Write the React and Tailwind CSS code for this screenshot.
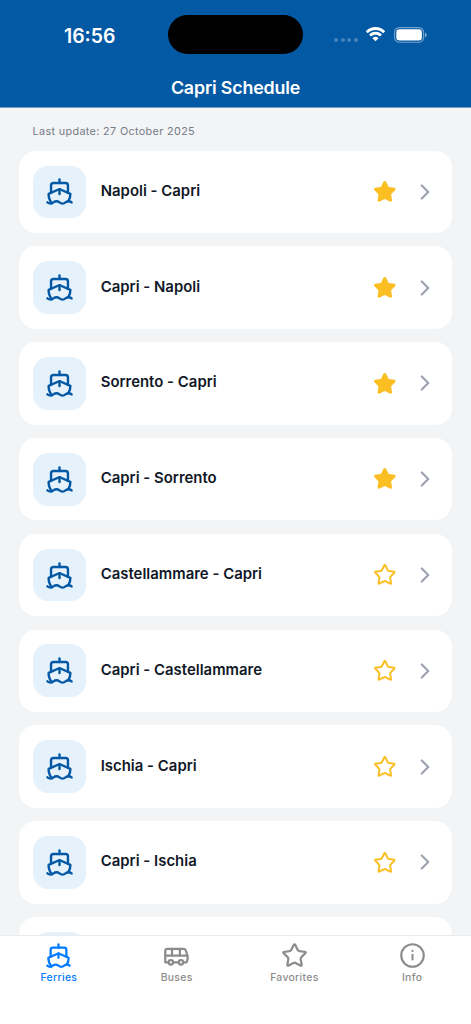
import { Bus, ChevronRight, Ship, Star } from "lucide-react";

const routes = [
  { id: 1, name: "Napoli - Capri", favorite: true },
  { id: 2, name: "Capri - Napoli", favorite: true },
  { id: 3, name: "Sorrento - Capri", favorite: true },
  { id: 4, name: "Capri - Sorrento", favorite: true },
  { id: 5, name: "Castellammare - Capri", favorite: false },
  { id: 6, name: "Capri - Castellammare", favorite: false },
  { id: 7, name: "Ischia - Capri", favorite: false },
  { id: 8, name: "Capri - Ischia", favorite: false },
  { id: 9, name: "", favorite: false }
];

function InfoIcon({ size }) {
  return (
    <svg width={size} height={size} viewBox="0 0 24 24" fill="none" stroke="currentColor">
      <circle cx="12" cy="12" r="10" strokeWidth="1.9" />
      <path d="M12 10.7v5.6" strokeWidth="1.8" />
      <circle cx="12" cy="7.9" r="1" fill="currentColor" stroke="none" />
    </svg>
  );
}

const tabs = [
  { label: "Ferries", icon: Ship, active: true },
  { label: "Buses", icon: Bus },
  { label: "Favorites", icon: Star },
  { label: "Info", icon: InfoIcon }
];

function StatusBar() {
  return (
    <div className="flex h-[69px] items-center">
      <div className="w-[168px] pl-[64px] pt-[2px] text-[19.4px] font-semibold leading-6">
        16:56
      </div>
      <div className="h-[39px] w-[135px] rounded-full bg-black" />

      <div className="ml-[31px] flex items-center">
        <div className="mt-[11px] flex gap-[2.5px]">
          {[0, 1, 2, 3].map((dot) => (
            <span key={dot} className="h-1 w-1 rounded-full bg-white/25" />
          ))}
        </div>

        <svg className="ml-[7px] h-[15px] w-[21px]" viewBox="0 0 21 15" fill="white">
          <path d="M10.5 3C13.4 3 16 4.1 18 6c.15.15.4.15.55 0l1.4-1.45c.16-.16.16-.4 0-.57C17.4 1.5 14.1.1 10.5.1S3.6 1.5 1.05 3.98c-.16.16-.16.41 0 .57L2.45 6c.15.15.4.15.55 0 2-1.9 4.6-3 7.5-3z" />
          <path d="M10.5 7.7c1.6 0 3.1.6 4.2 1.6.16.15.4.15.56 0l1.4-1.45c.17-.17.16-.42 0-.57a9 9 0 0 0-12.32 0c-.16.15-.17.4 0 .57l1.4 1.45c.16.15.4.15.56 0 1.1-1 2.6-1.6 4.2-1.6z" />
          <path d="M13.3 10.9c.17.16.16.42 0 .57l-2.5 2.5a.42.42 0 0 1-.6 0l-2.5-2.5c-.16-.15-.17-.41 0-.57a4.35 4.35 0 0 1 5.6 0z" />
        </svg>

        <svg className="ml-[8px] h-[16px] w-[33px]" viewBox="0 0 33 16" fill="none">
          <rect x="0.6" y="0.6" width="29" height="14.6" rx="4.8" stroke="white" strokeOpacity="0.45" strokeWidth="1.1" />
          <rect x="2.3" y="2.3" width="25.6" height="11.2" rx="3.2" fill="white" />
          <path d="M31 5.4c1.1.5 1.7 1.4 1.7 2.5s-.6 2-1.7 2.5z" fill="white" fillOpacity="0.5" />
        </svg>
      </div>
    </div>
  );
}

function RouteCard({ route }) {
  return (
    <div className="flex h-[82.4px] shrink-0 items-center rounded-[17px] bg-white pl-[14.5px] pr-[14px]">
      <div className="flex h-[52.6px] w-[52.6px] items-center justify-center rounded-[15.5px] bg-[#e5f1fb] pl-px">
        <Ship size={29} strokeWidth={2} className="text-[#0459a4]" />
      </div>

      <div className="ml-[15px] flex-1 pb-[2px] text-[14.9px] font-semibold leading-5 tracking-[0.02px] text-[#111827]">
        {route.name}
      </div>

      <Star
        size={23.6}
        strokeWidth={2}
        className={route.favorite ? "fill-[#fbbf24] text-[#fbbf24]" : "text-[#fbbf24]"}
      />
      <ChevronRight size={26} strokeWidth={2} className="ml-[15.8px] text-[#9ca3af]" />
    </div>
  );
}

export default function App() {
  return (
    <div className="flex h-[1024px] w-[471px] flex-col overflow-hidden bg-[#f3f4f6] font-['Inter',sans-serif]">
      <header className="h-[108px] shrink-0 border-b border-[#7f9dbd] bg-[#0459a4] text-white">
        <StatusBar />
        <h1 className="mt-[7px] text-center text-[17.8px] font-semibold leading-6 tracking-[-0.15px]">
          Capri Schedule
        </h1>
      </header>

      <main className="flex min-h-0 flex-1 flex-col overflow-hidden px-[18.6px]">
        <p className="mt-[16px] mb-[10.7px] pl-[14px] text-[10.8px] leading-4 tracking-[0.35px] text-[#747b88]">
          Last update: 27 October 2025
        </p>

        <div className="flex flex-col gap-[13.4px]">
          {routes.map((route) => (
            <RouteCard key={route.id} route={route} />
          ))}
        </div>
      </main>

      <nav className="flex h-[89px] shrink-0 border-t border-[#eaebec] bg-white pt-[6px]">
        {tabs.map(({ label, icon: Icon, active }) => (
          <div
            key={label}
            className={
              active
                ? "flex flex-1 flex-col items-center text-[#007aff]"
                : "flex flex-1 flex-col items-center text-[#8c8c8c]"
            }
          >
            <Icon size={27} strokeWidth={2} />
            <span className="mt-px text-[10.4px] font-medium leading-4 tracking-[0.32px]">
              {label}
            </span>
          </div>
        ))}
      </nav>
    </div>
  );
}
